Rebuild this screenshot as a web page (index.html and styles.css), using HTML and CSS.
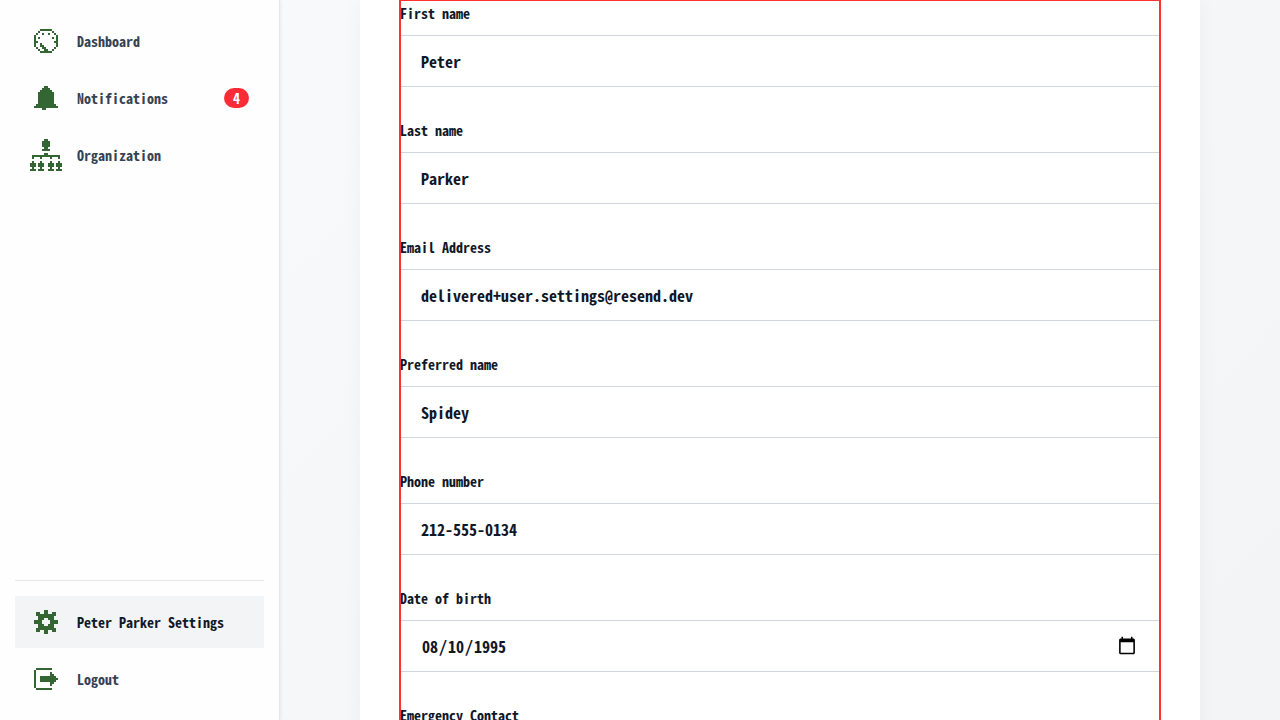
FILE: index.html
```html
<!DOCTYPE html>
<html lang="en">
<head>
<meta charset="utf-8">
<title>Settings</title>
<link rel="stylesheet" href="styles.css">
</head>
<body>
<nav class="sidebar">
  <div class="nav-group">
    <a class="nav-item" href="#dashboard">
      <span class="nav-icon"><svg width="24" height="24" viewBox="0 0 12 12"><path d="M3 0h6v1H3zM2 1h1v1H2zM9 1h1v1H9zM1 2h1v1H1zM4 2h1v1H4zM7 2h1v1H7zM10 2h1v1h-1zM0 3h1v6H0zM11 3h1v6h-1zM2 4h1v1H2zM9 4h1v1H9zM1 6h1v1H1zM10 6h1v1h-1zM3 7h1v1h1v1h1v1h1v1H5v-1H4V9H3zM1 9h1v1H1zM10 9h1v1h-1zM2 10h1v1H2zM9 10h1v1H9zM3 11h6v1H3z"/></svg></span>
      <span class="nav-label">Dashboard</span>
    </a>
    <a class="nav-item" href="#notifications">
      <span class="nav-icon"><svg width="24" height="24" viewBox="0 0 12 12"><path d="M5 0h2v1h1v1h1v1h1v6h1v1h1v1H6v1H4v-1H0v-1h1V9h1V3h1V2h1V1h1z"/></svg></span>
      <span class="nav-label">Notifications</span>
      <span class="badge">4</span>
    </a>
    <a class="nav-item" href="#organization">
      <span class="nav-icon"><svg width="32" height="32" viewBox="0 0 16 16"><path d="M7 0h2v1h1v3H9v1h1v1H6V5h1V4H6V1h1zM7 7h2v1h6v2h-1V9h-3v1h-1V9H6v1H5V9H2v1H1V8h6zM1 11h1v1h1v2H2v1h1v1H0v-1h1v-1H0v-2h1zM5 11h1v1h1v2H6v1h1v1H4v-1h1v-1H4v-2h1zM10 11h1v1h1v2h-1v1h1v1H9v-1h1v-1H9v-2h1zM14 11h1v1h1v2h-1v1h1v1h-3v-1h1v-1h-1v-2h1z"/></svg></span>
      <span class="nav-label">Organization</span>
    </a>
  </div>
  <div class="nav-group nav-footer">
    <a class="nav-item active" href="#settings" aria-current="page">
      <span class="nav-icon"><svg width="24" height="24" viewBox="0 0 12 12"><path fill-rule="evenodd" d="M5 0h2v2h2V1h2v2h-1v2h2v2h-2v2h1v2H9v-1H7v2H5v-2H3v1H1V9h1V7H0V5h2V3H1V1h2v1h2zM5 4v1H4v2h1v1h2V7h1V5H7V4z"/></svg></span>
      <span class="nav-label">Peter Parker Settings</span>
    </a>
    <a class="nav-item" href="#logout">
      <span class="nav-icon"><svg width="24" height="22" viewBox="0 0 12 11"><path d="M1 0h8v1H1zM0 1h1v9H0zM1 10h8v1H1zM3 4h5V2h1v1h1v1h1v1h1v1h-1v1h-1v1H9v1H8V7H3z"/></svg></span>
      <span class="nav-label">Logout</span>
    </a>
  </div>
</nav>
<main class="content">
  <section class="card">
    <form class="form">
      <div class="field"><label for="first">First name</label><input id="first" type="text" value="Peter"></div>
      <div class="field"><label for="last">Last name</label><input id="last" type="text" value="Parker"></div>
      <div class="field"><label for="email">Email Address</label><input id="email" type="email" value="delivered+user.settings@resend.dev"></div>
      <div class="field"><label for="preferred">Preferred name</label><input id="preferred" type="text" value="Spidey"></div>
      <div class="field"><label for="phone">Phone number</label><input id="phone" type="tel" value="212-555-0134"></div>
      <div class="field"><label for="birth">Date of birth</label><input id="birth" type="date" value="1995-08-10"></div>
      <div class="field"><label for="emergency">Emergency Contact</label><input id="emergency" type="text"></div>
    </form>
  </section>
</main>
</body>
</html>
```
FILE: styles.css
```css
* {
  box-sizing: border-box;
}

body {
  margin: 0;
  display: flex;
  height: 100vh;
  overflow: hidden;
  color: #101828;
  font-family: "Noto Sans Mono CJK SC", "Liberation Mono", monospace;
  font-size: 14px;
  background: linear-gradient(135deg, #f9fafb, #f3f4f6);
}

.sidebar {
  flex: 0 0 280px;
  display: flex;
  flex-direction: column;
  justify-content: space-between;
  padding: 15px;
  background: #fefefe;
  border-right: 1px solid #e5e7eb;
  box-shadow: 1px 0 3px rgba(0, 0, 0, 0.06);
}

.nav-group {
  display: flex;
  flex-direction: column;
  gap: 5px;
}

.nav-footer {
  padding-top: 15px;
  border-top: 1px solid #e5e7eb;
}

.nav-item {
  display: flex;
  align-items: center;
  gap: 15px;
  height: 52px;
  padding: 0 15px;
  color: #364153;
  font-weight: 700;
  text-decoration: none;
}

.nav-item.active {
  color: #101828;
  background: #f3f4f6;
}

.nav-icon {
  flex: 0 0 32px;
  display: flex;
  justify-content: center;
}

.nav-icon svg {
  display: block;
  fill: #336633;
  shape-rendering: crispEdges;
}

.nav-label {
  flex: 1;
  white-space: nowrap;
}

.badge {
  min-width: 25px;
  border-radius: 10px;
  background: #fb2c36;
  color: #fff;
  font-size: 14px;
  line-height: 20px;
  text-align: center;
}

.content {
  flex: 1;
  min-width: 0;
  padding: 0 80px;
}

.card {
  padding: 0 40px 40px;
  background: #fff;
  box-shadow: 0 0 20px rgba(0, 0, 0, 0.04);
}

.form {
  display: flex;
  flex-direction: column;
  gap: 30px;
  outline: 2px solid #ff3333;
  outline-offset: -1px;
}

.field {
  display: flex;
  flex-direction: column;
  gap: 8px;
}

.field label {
  font-weight: 700;
  line-height: 27px;
}

.field input {
  width: 100%;
  height: 52px;
  margin: 0;
  padding: 0 20px;
  border: 1px solid #d1d5dc;
  border-radius: 0;
  background: #fff;
  color: #101828;
  font: inherit;
  font-size: 16px;
  font-weight: 700;
}

.field input::-webkit-calendar-picker-indicator {
  width: 20px;
  height: 20px;
}
```
